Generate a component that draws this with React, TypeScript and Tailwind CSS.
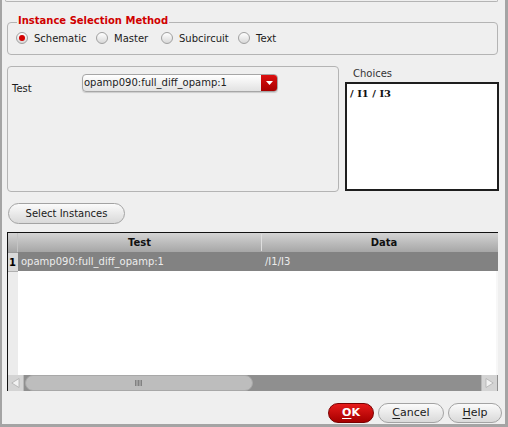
import React from "react";

function Radio({ label, checked, width }: { label: string; checked?: boolean; width: string }) {
  return (
    <div className={`flex items-center gap-[6px] ${width}`}>
      <span className="w-[12px] h-[12px] rounded-full border border-[#a0a0a0] bg-gradient-to-b from-white to-[#d8d8d8] flex items-center justify-center">
        {checked && <span className="w-[6px] h-[6px] rounded-full bg-[#d40000]" />}
      </span>
      <span>{label}</span>
    </div>
  );
}

function PillButton({ children, className }: { children: React.ReactNode; className: string }) {
  return (
    <div
      className={`flex items-center justify-center rounded-full border border-[#a3a3a3] bg-gradient-to-b from-[#fbfbfb] to-[#d9d9d9] text-[#1a1a1a] ${className}`}
    >
      {children}
    </div>
  );
}

export default function App() {
  return (
    <div className="w-[508px] h-[427px] bg-[#efefef] border-l-2 border-r-[3px] border-b-[3px] border-[#a4a4a4] flex flex-col font-['DejaVu_Sans',sans-serif] text-[10px] text-[#1c1c1c] select-none">
      {/* bottom edge of the box above */}
      <div className="ml-[3px] w-[493px] h-[2px] border-x border-b border-[#b4b4b4] rounded-b-[3px]" />

      {/* Instance Selection Method */}
      <div className="relative ml-[5px] mt-[20px] w-[491px] h-[33px] border border-[#b4b4b4] rounded-[4px] flex items-center pl-[8px] pb-[1px]">
        <span className="absolute left-[9px] top-[-8px] bg-[#efefef] px-[1px] leading-[12px] font-bold text-[#d00000]">
          Instance Selection Method
        </span>
        <Radio label="Schematic" checked width="w-[80px]" />
        <Radio label="Master" width="w-[65px]" />
        <Radio label="Subcircuit" width="w-[77px]" />
        <Radio label="Text" width="w-[60px]" />
      </div>

      {/* Test / Choices */}
      <div className="flex mt-[11px] ml-[5px]">
        <div className="w-[332px] h-[126px] border border-[#b4b4b4] rounded-[4px] pt-[7px] pl-[4px] flex items-start">
          <span className="w-[70px] mt-[9px] leading-[12px]">Test</span>
          <div className="w-[196px] h-[18px] flex rounded-[4px] border border-[#a6a6a6] bg-gradient-to-b from-white to-[#e2e2e2] shadow-[0_1px_1px_rgba(0,0,0,0.15)]">
            <span className="flex-1 pl-[1px] leading-[16px] text-[#222]">opamp090:full_diff_opamp:1</span>
            <span className="w-[16px] h-full rounded-r-[3px] bg-gradient-to-b from-[#dc1010] to-[#a80000] flex items-center justify-center">
              <svg width="7" height="4" viewBox="0 0 7 4">
                <path d="M0 0 L7 0 L3.5 4 Z" fill="#ffffff" />
              </svg>
            </span>
          </div>
        </div>
        <div className="ml-[6px] flex flex-col">
          <span className="ml-[8px] mt-[2px] leading-[12px] text-[#333]">Choices</span>
          <div className="mt-[2px] w-[154px] h-[109px] bg-white border-2 border-[#1e1e1e] pl-[3px] pt-[2px]">
            <span className="font-['DejaVu_Serif',serif] font-bold text-[10px] text-[#111] leading-[12px]">/ I1 / I3</span>
          </div>
        </div>
      </div>

      {/* Select Instances */}
      <PillButton className="ml-[6px] mt-[11px] w-[117px] h-[21px]">Select Instances</PillButton>

      {/* table */}
      <div className="ml-[5px] mt-[8px] w-[491px] h-[159px] border-t border-l border-[#111] flex flex-col bg-white">
        <div className="grid grid-cols-[10px_243px_1px_1fr] h-[19px] bg-gradient-to-b from-[#d4d4d4] to-[#a6a6a6] font-bold text-[#111] leading-[19px]">
          <span className="border-r border-[#c4c4c4]" />
          <span className="text-center">Test</span>
          <span className="bg-[#dedede] my-[1px]" />
          <span className="text-center pl-[8px]">Data</span>
        </div>
        <div className="grid grid-cols-[10px_243px_1fr] h-[19px] leading-[19px]">
          <span className="bg-[#d9d9d9] font-bold text-[#000] pl-[1px] border-t border-[#9a9a9a]">1</span>
          <span className="bg-[#828282] text-[#ececec] pl-[3px]">opamp090:full_diff_opamp:1</span>
          <span className="bg-[#828282] text-[#ececec] pl-[4px]">/I1/I3</span>
        </div>
        <div className="flex-1 flex">
          <span className="w-[10px] bg-[#ececec] border-t border-[#b0b0b0]" />
          <span className="flex-1 bg-white border-r-2 border-[#f7f7f7]" />
        </div>
        {/* scrollbar */}
        <div className="h-[16px] flex bg-[#8f8f8f]">
          <span className="w-[16px] h-full bg-[#d4d4d4] border-r border-[#b8b8b8] flex items-center justify-center">
            <svg width="9" height="10" viewBox="0 0 9 10">
              <path d="M8 0.5 L0.8 5 L8 9.5 Z" fill="#f2f2f2" stroke="#b0b0b0" strokeWidth="0.8" />
            </svg>
          </span>
          <span className="ml-[1px] w-[228px] h-full rounded-full bg-[#bdbdbd] border border-[#a8a8a8] flex items-center justify-center">
            <svg width="8" height="6" viewBox="0 0 8 6">
              <path d="M0.5 0 V6 M2 0 V6 M3.5 0 V6 M5 0 V6 M6.5 0 V6" stroke="#7a7a7a" strokeWidth="0.9" />
            </svg>
          </span>
          <span className="flex-1" />
          <span className="w-[16px] h-full bg-[#d4d4d4] border-l border-[#b8b8b8] flex items-center justify-center mr-[1px]">
            <svg width="9" height="10" viewBox="0 0 9 10">
              <path d="M1 0.5 L8.2 5 L1 9.5 Z" fill="#f2f2f2" stroke="#b0b0b0" strokeWidth="0.8" />
            </svg>
          </span>
        </div>
      </div>

      {/* dialog buttons */}
      <div className="flex justify-end gap-[4px] mt-[12px] pr-[3px]">
        <div className="w-[46px] h-[20px] rounded-full border border-[#7a0000] bg-gradient-to-b from-[#e61a1a] to-[#a60000] flex items-center justify-center text-white font-bold text-[11px]">
          <span className="underline underline-offset-2">O</span>K
        </div>
        <PillButton className="w-[66px] h-[20px] text-[11px]">
          <span className="underline underline-offset-2">C</span>ancel
        </PillButton>
        <PillButton className="w-[54px] h-[20px] text-[11px]">
          <span className="underline underline-offset-2">H</span>elp
        </PillButton>
      </div>
    </div>
  );
}
